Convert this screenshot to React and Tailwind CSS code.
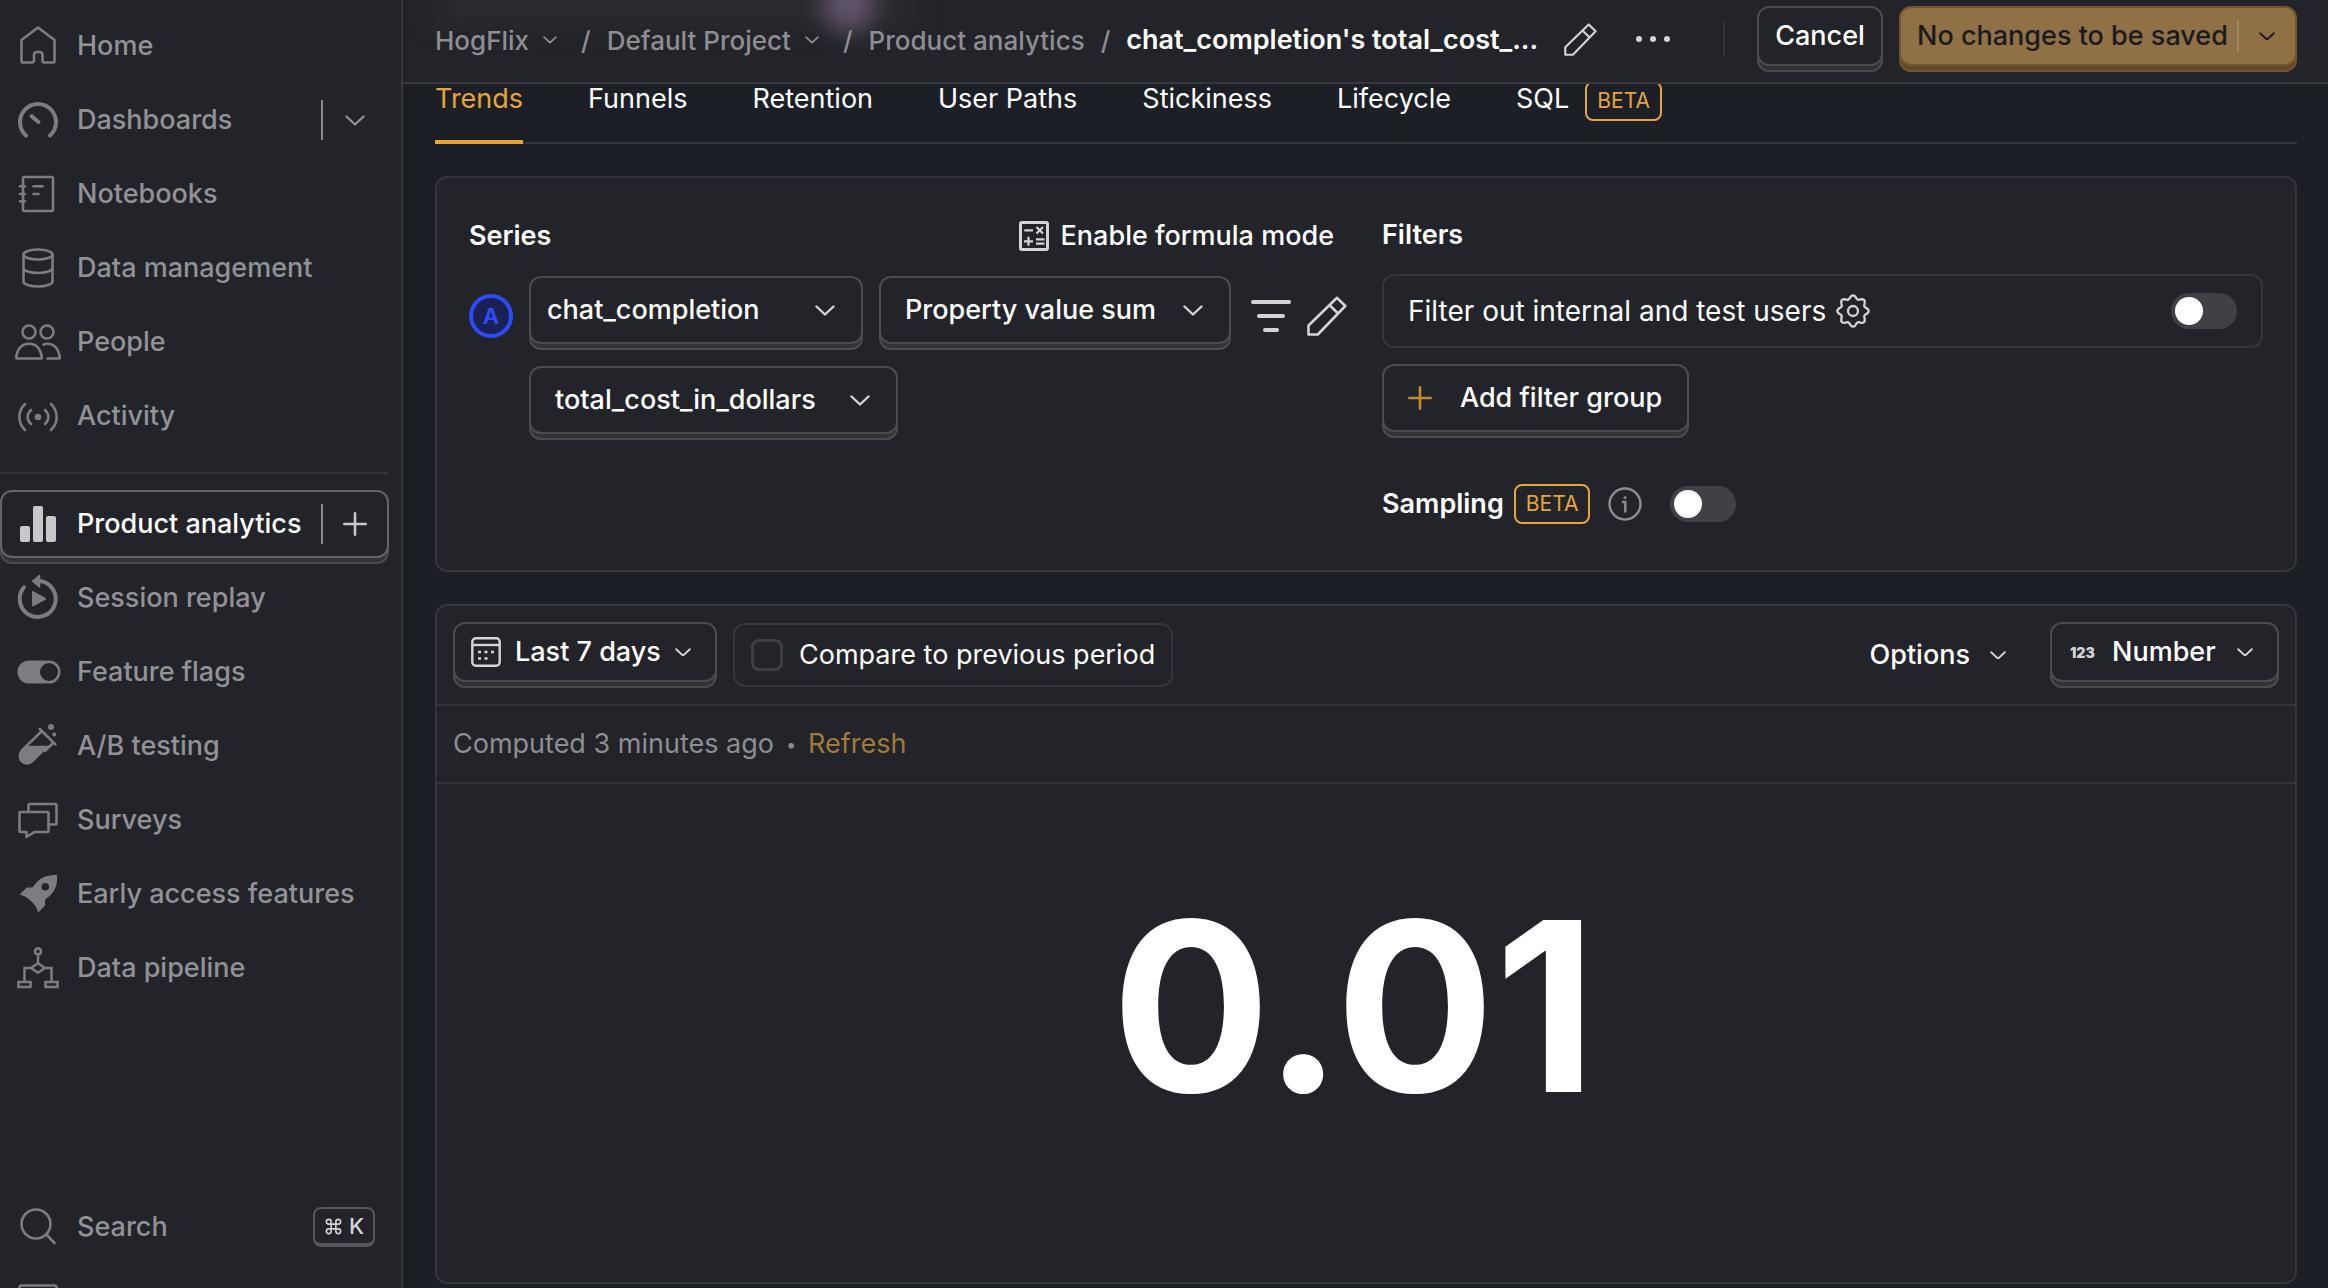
import React, { useState } from "react";
import { Command } from "lucide-react";
import clsx from "clsx";

const ICONS = {
    home: (
        <path d="M21 2.5 37.5 15v21.5q0 1-1 1h-9q-2 0-2-2V30q0-3-3-3h-2.500q-3 0-3 3v5.500q0 2-2 2h-9.500q-1 0-1-1V15Z" />
    ),
    dashboards: (
        <g strokeWidth="4">
            <path d="M9 36.500A18 18 0 1 1 33 36.500" />
            <path d="M14.500 17l7 6" />
        </g>
    ),
    notebooks: (
        <>
            <rect x="6" y="4" width="30" height="34" rx="1.500" />
            <path d="M3 13.300h5M3 21h5M3 28.300h5M16.500 13.300h9M16.500 21h5" />
        </>
    ),
    data: (
        <>
            <ellipse cx="21" cy="7.500" rx="14.500" ry="5" />
            <path d="M6.500 7.500v27c0 2.800 6.500 5 14.500 5s14.500-2.200 14.500-5v-27M6.500 21c0 2.800 6.500 5 14.500 5s14.500-2.200 14.500-5" />
        </>
    ),
    people: (
        <>
            <circle cx="12" cy="11" r="6.500" />
            <circle cx="30" cy="11" r="6.500" />
            <path d="M0 37.500c-.6 0-1-.6-.8-1.200C.5 28 5 22.800 12 22.800S23.500 28 24.800 36.300c.1.600-.3 1.200-.9 1.200Z" />
            <path d="M26.500 23.600c1-.5 2.200-.8 3.500-.8 7 0 11.500 5.200 12.800 13.500.1.600-.3 1.200-.9 1.200H30.500" />
        </>
    ),
    activity: (
        <>
            <circle cx="21" cy="22" r="3.300" fill="currentColor" stroke="none" />
            <path d="M14 15c-4.500 4-4.500 10 0 14M28 15c4.500 4 4.500 10 0 14M8 9c-7.500 7-7.500 19 0 26M34 9c7.500 7 7.500 19 0 26" />
        </>
    ),
    analytics: (
        <g fill="currentColor" stroke="none">
            <rect x="3" y="23" width="10" height="16" rx="2" />
            <rect x="16" y="3" width="10" height="36" rx="2" />
            <rect x="29" y="13" width="10" height="26" rx="2" />
        </g>
    ),
    replay: (
        <>
            <path d="M23 4.100A18 18 0 1 1 7 10.300" strokeWidth="4" />
            <path d="M15.500 4 22.500-1.500V10Z" fill="currentColor" strokeWidth="1.500" />
            <path d="M16 15v13.500l12-6.700Z" fill="currentColor" strokeWidth="2" />
        </>
    ),
    flags: (
        <path
            fill="currentColor"
            stroke="none"
            fillRule="evenodd"
            d="M12 9.500h20a11.500 11.500 0 0 1 0 23H12a11.500 11.500 0 0 1 0-23Zm20 2.500a9 9 0 1 0 0 18 9 9 0 0 0 0-18Z"
        />
    ),
    testing: (
        <>
            <path d="M9 20.700h23.500L15.700 37.500A8.500 8.500 0 0 1 3.700 25.500Z" fill="currentColor" stroke="none" />
            <path d="M25 6 5 25.200M36.500 17.500 28 26M22.800 4l15.700 15.500" strokeWidth="2.500" />
            <circle cx="34" cy="2" r="3" fill="currentColor" stroke="none" />
            <circle cx="37.200" cy="9.500" r="2" fill="currentColor" stroke="none" />
        </>
    ),
    surveys: (
        <>
            <path d="M3.500 13h27q1 0 1 1v18q0 1-1 1H17.500l-8 5V33h-6q-1 0-1-1V14q0-1 1-1Z" />
            <path d="M11.500 12.500V6q0-1 1-1h26q1 0 1 1v18.500q0 1-1 1H32.500" />
        </>
    ),
    rocket: (
        <path
            fill="currentColor"
            stroke="none"
            fillRule="evenodd"
            d="M40 2C32 2 26 3.500 21.500 7.500 19 9.700 17 12 15.300 14.500H9.700L2.700 21.600C11 24 19 31 21.300 39.500L28 32.500V26.500C35 22 41 16 40 2ZM28.300 10a3.800 3.800 0 1 1 0 7.600 3.800 3.800 0 0 1 0-7.600Z"
        />
    ),
    pipeline: (
        <g strokeLinejoin="miter">
            <circle cx="21" cy="4.400" r="3" />
            <path d="M21 7.400v9M21 16.300l7 4.700-7 4.700-7-4.700ZM14 21H7.500v13M28 21h6.500v13" strokeWidth="2.500" />
            <path d="M1.500 35h12v5h-12ZM28.500 35h12v5h-12Z" />
        </g>
    ),
    search: (
        <>
            <circle cx="19" cy="18" r="14.500" />
            <path d="M29.500 28.500 37.500 37" />
        </>
    ),
    inbox: <rect x="2.500" y="5.500" width="37" height="32" rx="2" />
};

function SideIcon({ name }) {
    return (
        <svg
            viewBox="0 0 42 42"
            className="h-[42px] w-[42px] shrink-0 overflow-visible"
            fill="none"
            stroke="currentColor"
            strokeWidth="2.600"
            strokeLinecap="round"
            strokeLinejoin="round"
        >
            {ICONS[name]}
        </svg>
    );
}

function Chevron({ className }) {
    return (
        <svg viewBox="0 0 20 11" className={clsx("shrink-0", className)} fill="none" stroke="currentColor" strokeWidth="2.400" strokeLinecap="round" strokeLinejoin="round">
            <path d="M1.500 1.500 10 9.500l8.500-8" />
        </svg>
    );
}

function Plus({ className }) {
    return (
        <svg viewBox="0 0 24 24" className={clsx("h-6 w-6 shrink-0", className)} fill="none" stroke="currentColor" strokeWidth="2.600" strokeLinecap="round">
            <path d="M12 1.300v21.400M1.300 12h21.400" />
        </svg>
    );
}

function Pencil({ className }) {
    return (
        <svg viewBox="0 0 40 40" className={clsx("shrink-0", className)} fill="none" stroke="currentColor" strokeWidth="2.600" strokeLinejoin="round">
            <path d="M1.500 38.500V29.500L30 1.800 38.300 10 10.800 38.500ZM22.500 9l8.500 8.500" />
        </svg>
    );
}

// outline of the cog, eight soft teeth
const GEAR_PATH =
    Array.from({ length: 96 }, (_, i) => {
        const t = (i / 96) * Math.PI * 2;
        const r = 14 + 1.7 * Math.cos(8 * t);
        return `${i ? "L" : "M"}${(17 + r * Math.sin(t)).toFixed(2)} ${(17 - r * Math.cos(t)).toFixed(2)}`;
    }).join("") + "Z";

function Gear() {
    return (
        <svg viewBox="0 0 34 34" className="h-[34px] w-[34px]" fill="none" stroke="currentColor" strokeWidth="2.300" strokeLinejoin="round">
            <path d={GEAR_PATH} />
            <circle cx="17" cy="17" r="5" />
        </svg>
    );
}

function Calculator() {
    return (
        <svg viewBox="0 0 30 30" className="h-[30px] w-[30px] text-[#d4d4d6]" fill="none" stroke="currentColor" strokeWidth="2.200">
            <rect x="1.500" y="1.500" width="27" height="27" rx="1.500" strokeWidth="3" />
            <path d="M5.300 9.300H14M17.500 6l6.500 6.500M24 6l-6.500 6.500M9.500 15.800v9M5 20.300h9M17 18.300h8.500M17 22.600h8.500" />
        </svg>
    );
}

function Calendar() {
    return (
        <svg viewBox="0 0 30 30" className="h-[30px] w-[30px]" fill="none" stroke="currentColor" strokeWidth="2.400">
            <rect x="1.300" y="1.300" width="27.400" height="27.400" rx="3.500" />
            <path d="M1.300 8h27.400" />
            <path d="M7 15h3M13.500 15h3M20 15h3M7 21.500h3M13.500 21.500h3" />
        </svg>
    );
}

const RAISED =
    "mb-1.5 rounded-xl border-2 border-[#4b4c51] bg-[#232429] shadow-[0_6px_0_-2px_#333334,0_6px_0_0_#4b4c51]";

function Picker({ label, value, icon, className, selectClass, chevronClass }) {
    return (
        <div className={clsx("relative", RAISED, className)}>
            {icon && <span className="pointer-events-none absolute inset-y-0 left-4 flex items-center text-[#d4d4d6]">{icon}</span>}
            <select
                aria-label={label}
                defaultValue={value}
                className={clsx("h-full w-full appearance-none text-[27px] font-medium text-white outline-none", selectClass)}
            >
                <option>{value}</option>
            </select>
            <span className="pointer-events-none absolute inset-y-0 right-6 flex items-center text-[#d4d4d6]">
                <Chevron className={chevronClass} />
            </span>
        </div>
    );
}

function Toggle({ label }) {
    return (
        <input
            type="checkbox"
            role="switch"
            aria-label={label}
            className="relative h-9 w-[66px] shrink-0 appearance-none rounded-full bg-[#404145] before:absolute before:left-1 before:top-1 before:h-7 before:w-7 before:rounded-full before:bg-white checked:bg-[#e5a53b] checked:before:left-[34px]"
        />
    );
}

function Beta() {
    return (
        <span className="inline-block h-10 rounded-lg border-2 border-[#e5a53b] px-2.5 text-[21px] font-normal leading-9 text-[#e5a53b]">
            BETA
        </span>
    );
}

function SideItem({ icon, label, active, extra, extraLabel }) {
    return (
        <li
            className={clsx(
                "flex h-[68px] shrink-0 items-center rounded-xl border-2",
                active
                    ? "border-[#64656a] text-white shadow-[0_6px_0_-2px_#333334,0_6px_0_0_#4b4c51]"
                    : "border-transparent text-[#929296]"
            )}
        >
            <a href="#" className="flex flex-1 items-center gap-[18px] whitespace-nowrap pl-[15px] text-[27px] font-medium leading-[42px]">
                <span className={active ? "text-[#c8c8cb]" : "text-[#7c7c82]"}>
                    <SideIcon name={icon} />
                </span>
                {label}
            </a>
            {extra && (
                <button
                    type="button"
                    aria-label={extraLabel}
                    className={clsx("flex h-10 w-[66px] items-center justify-center border-l-2 border-[#8a8a8f]", active && "text-[#c8c8cb]")}
                >
                    {extra}
                </button>
            )}
        </li>
    );
}

function Sidebar() {
    return (
        <aside className="sticky top-0 flex h-screen w-[403px] shrink-0 flex-col border-r-2 border-[#35363b] bg-[#232429] pr-3">
            <nav className="flex-1 overflow-hidden pt-3">
                <ul className="flex flex-col gap-1.5">
                    <SideItem icon="home" label="Home" />
                    <SideItem icon="dashboards" label="Dashboards" extraLabel="Show dashboards" extra={<Chevron className="w-5" />} />
                    <SideItem icon="notebooks" label="Notebooks" />
                    <SideItem icon="data" label="Data management" />
                    <SideItem icon="people" label="People" />
                    <SideItem icon="activity" label="Activity" />
                </ul>
                <hr className="mb-4 mt-[22px] border-t-2 border-[#35363b]" />
                <ul className="flex flex-col gap-1.5">
                    <SideItem icon="analytics" label="Product analytics" active extraLabel="New insight" extra={<Plus />} />
                    <SideItem icon="replay" label="Session replay" />
                    <SideItem icon="flags" label="Feature flags" />
                    <SideItem icon="testing" label="A/B testing" />
                    <SideItem icon="surveys" label="Surveys" />
                    <SideItem icon="rocket" label="Early access features" />
                    <SideItem icon="pipeline" label="Data pipeline" />
                </ul>
            </nav>
            <div className="flex h-[95px] shrink-0 flex-col gap-1.5 overflow-hidden">
                <button type="button" className="flex h-[68px] shrink-0 items-center gap-[18px] pl-[17px] pr-3.5 text-[27px] font-medium leading-[42px] text-[#929296]">
                    <span className="text-[#7c7c82]">
                        <SideIcon name="search" />
                    </span>
                    Search
                    <kbd className="ml-auto flex h-10 w-[62px] items-center justify-center gap-1.5 rounded-lg border-2 border-b-4 border-[#55565a] font-[Inter,sans-serif] text-[22px] text-[#d4d4d6]">
                        <Command size={19} />K
                    </kbd>
                </button>
                <div className="flex h-[68px] shrink-0 items-center pl-[17px] text-[#7c7c82]">
                    <SideIcon name="inbox" />
                </div>
            </div>
        </aside>
    );
}

function Header() {
    return (
        <header className="sticky top-0 z-10 flex h-[84px] items-center overflow-hidden whitespace-nowrap border-b-2 border-[#35363b] bg-[#232429] pb-1 pl-8 pr-[31px]">
            <div className="absolute -top-2 left-8 h-8 w-[480px] bg-[#2b2b30] blur-md" />
            <div className="absolute -top-6 left-[420px] h-14 w-[52px] rounded-full bg-[#62556a] blur-md" />
            <nav className="relative flex items-center pt-0.5 text-[26px] font-medium text-[#8e8e92]">
                <button type="button" className="flex items-center gap-3.5">
                    HogFlix <Chevron className="w-3.5" />
                </button>
                <span className="ml-6 mr-4">/</span>
                <button type="button" className="flex items-center gap-3.5">
                    Default Project <Chevron className="w-3.5" />
                </button>
                <span className="ml-6 mr-4">/</span>
                <a href="#">Product analytics</a>
                <span className="mx-4">/</span>
                <h1 className="text-[27px] font-semibold text-white">chat_completion's total_cost_...</h1>
            </nav>
            <button type="button" aria-label="Edit name" className="ml-[26px] text-[#d4d4d6]">
                <Pencil className="h-[33px] w-[33px]" />
            </button>
            <button type="button" aria-label="More" className="ml-[39px] flex gap-2 text-[#d4d4d6]">
                <span className="h-1.5 w-1.5 rounded-full bg-current" />
                <span className="h-1.5 w-1.5 rounded-full bg-current" />
                <span className="h-1.5 w-1.5 rounded-full bg-current" />
            </button>
            <div className="ml-auto flex items-center gap-4">
                <span className="mr-4 h-[34px] w-0.5 bg-[#35363b]" />
                <button type="button" className={clsx("h-[60px] w-[126px] text-[27px] font-medium text-white", RAISED)}>
                    Cancel
                </button>
                <div className="mb-1.5 flex h-[60px] w-[398px] items-center rounded-xl border-2 border-[#72552a] bg-[#907045] text-[#1b1b1d] shadow-[0_6px_0_-2px_#604a2d,0_6px_0_0_#72552a]">
                    <button type="button" className="flex-1 pl-4 text-left text-[27px] font-medium">
                        No changes to be saved
                    </button>
                    <button type="button" aria-label="Save options" className="flex h-8 w-[58px] items-center justify-center border-l-2 border-[#9e8661]">
                        <Chevron className="w-4" />
                    </button>
                </div>
            </div>
        </header>
    );
}

function InsightTabs() {
    const [tab, setTab] = useState("Trends");
    const tabs = ["Trends", "Funnels", "Retention", "User Paths", "Stickiness", "Lifecycle", "SQL"];

    return (
        <div role="tablist" className="-mt-1 flex h-16 gap-[65px] shadow-[inset_0_-2px_0_0_#35363b]">
            {tabs.map((name) => (
                <button
                    key={name}
                    type="button"
                    role="tab"
                    aria-selected={tab === name}
                    onClick={() => setTab(name)}
                    className={clsx(
                        "flex items-baseline gap-4 whitespace-nowrap text-[27px] leading-[38px]",
                        tab === name ? "border-b-4 border-[#e5a53b] text-[#e5a53b]" : "text-white"
                    )}
                >
                    {name}
                    {name === "SQL" && <Beta />}
                </button>
            ))}
        </div>
    );
}

function EditorFilters() {
    return (
        <section className="mt-8 grid grid-cols-2 gap-8 rounded-xl border-2 border-[#35363b] bg-[#232429] px-8 pb-[46px] pt-8">
            <div>
                <div className="flex h-[52px] items-center justify-between pr-4">
                    <h2 className="text-[27px] font-semibold text-white">Series</h2>
                    <button type="button" className="flex items-center gap-3 text-[27px] font-medium text-white">
                        <Calculator />
                        Enable formula mode
                    </button>
                </div>
                <div className="mt-3.5 flex items-start">
                    <div className="mr-4 flex h-20 items-center">
                        <span className="flex h-11 w-11 items-center justify-center rounded-full border-4 border-[#2a4bf5] bg-[#1b2054] text-[22px] font-bold text-[#2a4bf5]">
                            A
                        </span>
                    </div>
                    <div className="flex flex-col items-start gap-4">
                        <div className="flex gap-4">
                            <Picker label="Event" value="chat_completion" className="h-[68px] w-[334px]" selectClass="pl-4 pr-14" chevronClass="mr-0.5 w-5" />
                            <Picker label="Aggregation" value="Property value sum" className="h-[68px] w-[352px]" selectClass="pl-6 pr-14" chevronClass="mr-0.5 w-5" />
                        </div>
                        <Picker label="Property" value="total_cost_in_dollars" className="h-[68px] w-[369px]" selectClass="pl-6 pr-14" chevronClass="mr-0.5 w-5" />
                    </div>
                    <div className="ml-4 flex h-20 items-center gap-2 text-[#d4d4d6]">
                        <button type="button" aria-label="Show filters" className="flex h-12 w-12 items-center justify-center">
                            <svg viewBox="0 0 40 32" className="h-8 w-10" stroke="currentColor" strokeWidth="4" strokeLinecap="round">
                                <path d="M2 2h36M8 16h24M14 30h12" />
                            </svg>
                        </button>
                        <button type="button" aria-label="Rename series" className="flex h-12 w-12 items-center justify-center">
                            <Pencil className="h-10 w-10" />
                        </button>
                    </div>
                </div>
            </div>

            <div className="flex flex-col items-start">
                <h2 className="flex h-[50px] items-center text-[27px] font-semibold text-white">Filters</h2>
                <div className="mt-3.5 flex h-[74px] w-full items-center rounded-xl border-2 border-[#35363b] px-6 text-[28px] text-white">
                    Filter out internal and test users
                    <button type="button" aria-label="Configure test users" className="ml-2.5 text-[#d4d4d6]">
                        <Gear />
                    </button>
                    <div className="ml-auto flex">
                        <Toggle label="Filter out internal and test users" />
                    </div>
                </div>
                <button
                    type="button"
                    className={clsx("mt-4 flex h-[68px] w-[307px] items-center gap-7 whitespace-nowrap pl-6 text-[27px] font-medium text-white", RAISED)}
                >
                    <Plus className="text-[#c28c35]" />
                    Add filter group
                </button>
                <div className="mt-[46px] flex h-10 items-center text-[27px] font-semibold text-white">
                    <span className="mr-2.5">Sampling</span>
                    <Beta />
                    <svg viewBox="0 0 34 34" className="ml-[18px] mr-7 h-[34px] w-[34px] text-[#8e8e92]" fill="none" stroke="currentColor" strokeWidth="2.400">
                        <circle cx="17" cy="17" r="15.500" />
                        <path d="M14 15h3.300v10.500" />
                        <circle cx="17" cy="10.500" r="1.500" fill="currentColor" stroke="none" />
                    </svg>
                    <Toggle label="Sampling" />
                </div>
            </div>
        </section>
    );
}

function InsightResult() {
    return (
        <section className="mt-8 rounded-xl border-2 border-[#35363b] bg-[#232429]">
            <div className="flex items-center gap-4 border-b-2 border-[#35363b] px-4 py-4">
                <Picker label="Date range" value="Last 7 days" icon={<Calendar />} className="h-[60px] w-[264px]" selectClass="pl-[60px] pr-12" chevronClass="w-4" />
                <label className="flex h-16 items-center gap-4 whitespace-nowrap rounded-xl border-2 border-[#35363b] px-4 text-[27px] text-white">
                    <input type="checkbox" className="h-8 w-8 appearance-none rounded-lg border-[3px] border-[#3f4045] checked:bg-[#e5a53b]" />
                    Compare to previous period
                </label>
                <button type="button" className="ml-auto flex items-center gap-5 pr-7 text-[27px] font-medium text-white">
                    Options <Chevron className="w-4 text-[#d4d4d6]" />
                </button>
                <Picker
                    label="Chart type"
                    value="Number"
                    icon={<span className="pl-0.5 text-[14px] font-black">123</span>}
                    className="h-[60px] w-[229px]"
                    selectClass="pl-[60px] pr-12"
                    chevronClass="w-4"
                />
            </div>
            <div className="flex h-[78px] items-center border-b-2 border-[#35363b] px-4 text-[27px] text-[#8e8e92]">
                Computed 3 minutes ago
                <span className="mx-3 text-[18px]">•</span>
                <button type="button" className="text-[#a07a3d]">
                    Refresh
                </button>
            </div>
            <div className="flex h-[498px] items-center justify-center pb-[54px] pr-6 text-[236px] font-bold leading-none text-white">
                0.01
            </div>
        </section>
    );
}

export default function App() {
    return (
        <div className="flex min-h-screen bg-[#1d1f27] font-[Inter,sans-serif]">
            <Sidebar />
            <div className="min-w-0 flex-1">
                <Header />
                <main className="pl-8 pr-[31px]">
                    <InsightTabs />
                    <EditorFilters />
                    <InsightResult />
                </main>
            </div>
        </div>
    );
}
